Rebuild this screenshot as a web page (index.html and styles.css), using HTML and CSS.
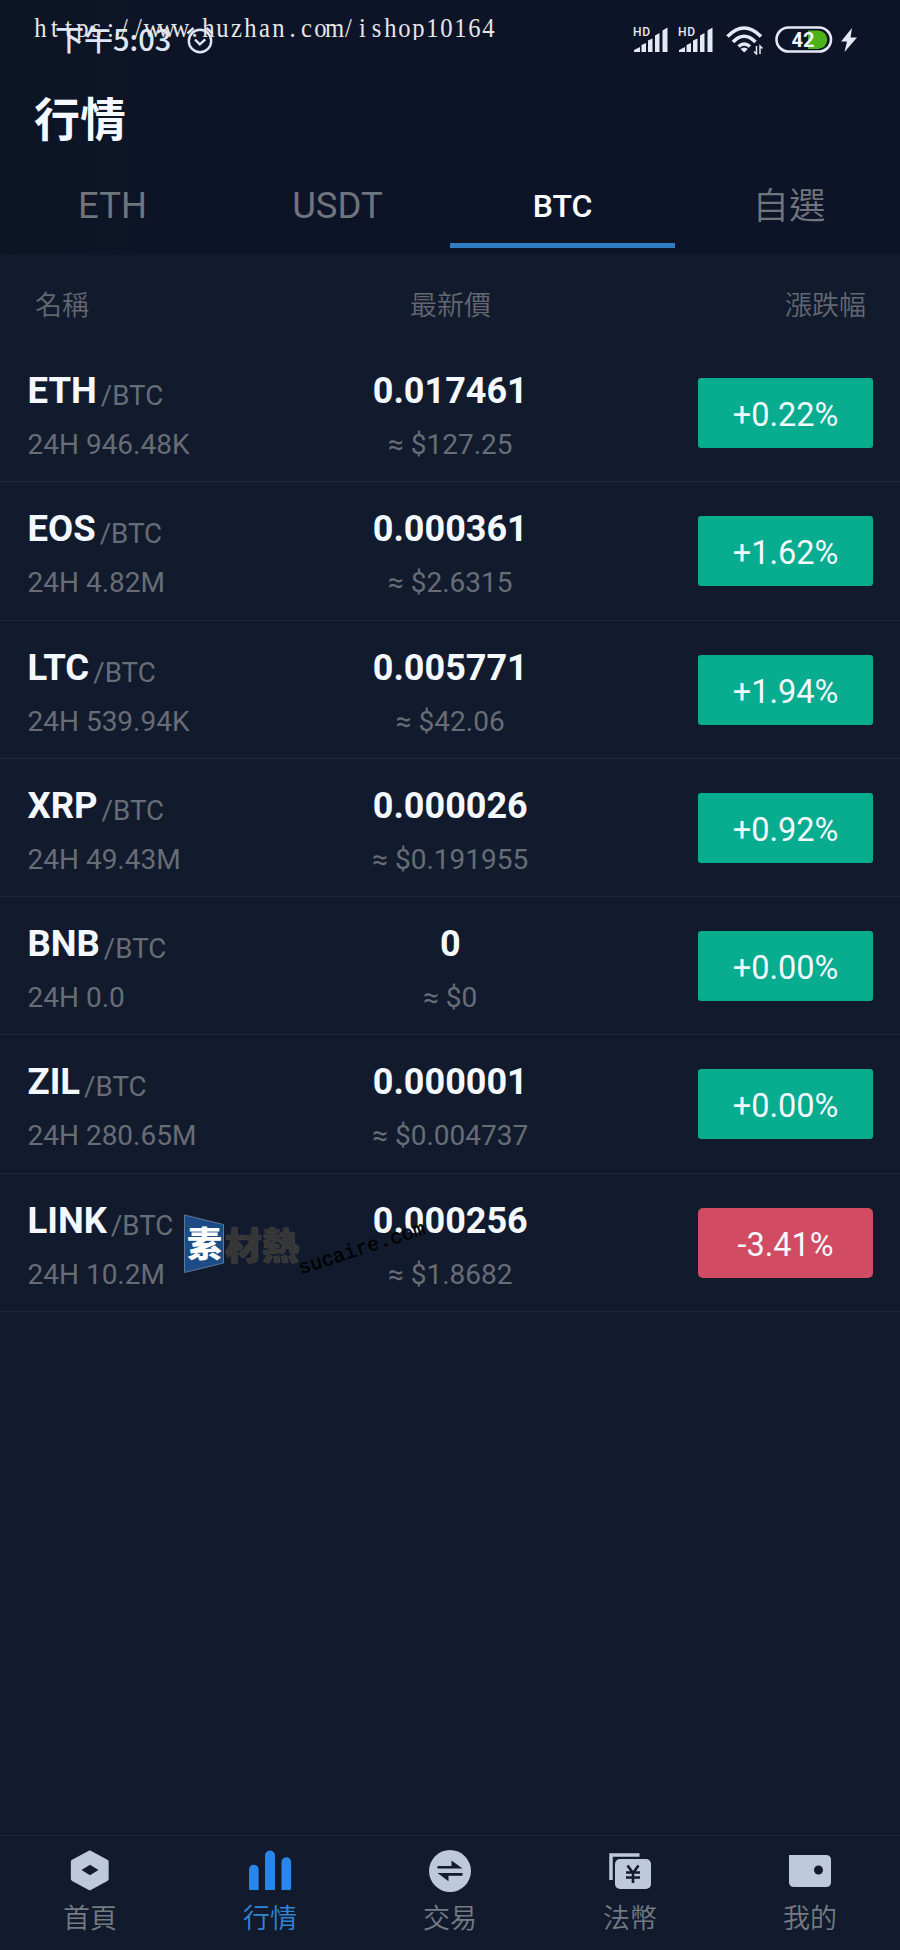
FILE: index.html
```html
<!DOCTYPE html>
<html lang="zh-Hant">
<head>
<meta charset="utf-8">
<title>行情</title>
<link rel="stylesheet" href="styles.css">
</head>
<body>
<div class="screen">
  <header class="top">
    <div class="status">
      <div class="status-left">
        <span class="clock">下午5:03</span>
        <svg class="alarm" width="30" height="30" viewBox="0 0 30 30" fill="none" stroke="#dfe6f6" stroke-width="2.4"><circle cx="15" cy="16" r="11.2"/><path d="M10 14.500l4.800 4.800 5.500-5M2.500 8.500l6-5.500M27.500 8.500l-6-5.500"/></svg>
      </div>
      <div class="status-right">
        <svg width="36" height="28" viewBox="0 0 36 28" fill="#e4e9f6"><text class="hd" x="0" y="9.500">HD</text><path d="M1 26v-2l6-3v5zM8.500 26v-7l4.500-2v9zM15 26V14.500l4.500-2V26zM22 26V9.500l4.500-2.500v19zM29.500 26V4.500l5-3V26z"/></svg>
        <svg width="36" height="28" viewBox="0 0 36 28" fill="#e4e9f6"><text class="hd" x="0" y="9.500">HD</text><path d="M1 26v-2l6-3v5zM8.500 26v-7l4.500-2v9zM15 26V14.500l4.500-2V26zM22 26V9.500l4.500-2.500v19zM29.500 26V4.500l5-3V26z"/></svg>
        <svg class="wifi" width="38" height="30" viewBox="0 0 38 30" fill="none" stroke="#e4e9f6" stroke-width="3.600"><path d="M1.500 11.500Q18 -5.500 35 11.500M7 17Q18 5.500 29.500 17M12.500 21.500q5.700-5 11.400 0"/><path d="M14.500 24l3.700 3.500 3.700-3.500q-3.700-3-7.400 0z" fill="#e4e9f6" stroke="none"/><path d="M30.500 21v8l-2.500-2.500M34 29v-8l2.500 2.500" stroke-width="1.500"/></svg>
        <svg class="battery" width="58" height="28" viewBox="0 0 58 28"><rect x="1.500" y="1.500" width="54.500" height="24" rx="12" fill="none" stroke="#e4e9f6" stroke-width="2.600"/><path d="M33 4.500h10a9.200 9.200 0 0 1 0 18.500H33z" fill="#4cb31c"/><text class="level" x="28" y="20.800">42</text></svg>
        <svg class="bolt" width="16" height="26" viewBox="0 0 16 26" fill="#e4e9f6"><path d="M11 1L0 14.500h6L3.500 25 16 10.500H9.500z"/></svg>
      </div>
    </div>
    <h1 class="title">行情</h1>
    <nav class="tabs">
      <a class="tab">ETH</a><a class="tab">USDT</a><a class="tab active">BTC</a><a class="tab fav">自選</a>
    </nav>
  </header>
  <main class="market">
    <div class="heads"><span>名稱</span><span>最新價</span><span>漲跌幅</span></div>
    <section class="row"><div class="coin"><p class="pair"><b>ETH</b><span>/BTC</span></p><p class="sub">24H 946.48K</p></div><div class="quote"><p class="price">0.017461</p><p class="sub">≈ $127.25</p></div><div class="badge">+0.22%</div></section>
    <section class="row"><div class="coin"><p class="pair"><b>EOS</b><span>/BTC</span></p><p class="sub">24H 4.82M</p></div><div class="quote"><p class="price">0.000361</p><p class="sub">≈ $2.6315</p></div><div class="badge">+1.62%</div></section>
    <section class="row"><div class="coin"><p class="pair"><b>LTC</b><span>/BTC</span></p><p class="sub">24H 539.94K</p></div><div class="quote"><p class="price">0.005771</p><p class="sub">≈ $42.06</p></div><div class="badge">+1.94%</div></section>
    <section class="row"><div class="coin"><p class="pair"><b>XRP</b><span>/BTC</span></p><p class="sub">24H 49.43M</p></div><div class="quote"><p class="price">0.000026</p><p class="sub">≈ $0.191955</p></div><div class="badge">+0.92%</div></section>
    <section class="row"><div class="coin"><p class="pair"><b>BNB</b><span>/BTC</span></p><p class="sub">24H 0.0</p></div><div class="quote"><p class="price">0</p><p class="sub">≈ $0</p></div><div class="badge">+0.00%</div></section>
    <section class="row"><div class="coin"><p class="pair"><b>ZIL</b><span>/BTC</span></p><p class="sub">24H 280.65M</p></div><div class="quote"><p class="price">0.000001</p><p class="sub">≈ $0.004737</p></div><div class="badge">+0.00%</div></section>
    <section class="row"><div class="coin"><p class="pair"><b>LINK</b><span>/BTC</span></p><p class="sub">24H 10.2M</p></div><div class="quote"><p class="price">0.000256</p><p class="sub">≈ $1.8682</p></div><div class="badge down">-3.41%</div></section>
  </main>
  <nav class="dock">
    <a class="item"><svg width="44" height="44" viewBox="0 0 44 44"><path d="M21 1.500q1-.6 2 0l17 9.500q1.300.8 1.300 2v18q0 1.200-1.300 2l-17 9.500q-1 .6-2 0l-17-9.500q-1.300-.8-1.300-2V13q0-1.200 1.300-2z" transform="translate(.2 .2) scale(.98 .96)" fill="#bfc9dc"/><path d="M22 15.700l8.500 5.300-8.500 5.300-8.500-5.300z" fill="#131b2d"/></svg><span>首頁</span></a>
    <a class="item on"><svg width="44" height="44" viewBox="0 0 44 44" fill="#2a86ea"><path d="M1 39.500V20.500a4.800 4.800 0 0 1 9.600 0V41H2.500Q1 41 1 39.500zM17 41V6.500a5 5 0 0 1 10 0V41zM33.500 41V13a4.800 4.800 0 0 1 9.600 0v26.500q0 1.500-1.500 1.500z"/></svg><span>行情</span></a>
    <a class="item"><svg width="44" height="44" viewBox="0 0 44 44"><circle cx="22" cy="22" r="21" fill="#bfc9dc"/><path d="M9.500 17h14v-5.500l11 8h-25zM34.500 24v2.700h-14v5.500l-11-8.200z" fill="#131b2d"/></svg><span>交易</span></a>
    <a class="item"><svg width="44" height="44" viewBox="0 0 44 44"><path d="M3 31V6h28.500" fill="none" stroke="#bfc9dc" stroke-width="3.500"/><rect x="7" y="10" width="36" height="30" rx="5" fill="#bfc9dc"/><path d="M19.500 16.500l5.500 7.500 5.500-7.500M25 24v10M18 23.500h14M18 28.500h14" fill="none" stroke="#131b2d" stroke-width="2.600"/></svg><span>法幣</span></a>
    <a class="item"><svg width="44" height="44" viewBox="0 0 44 44"><path d="M1 6h37q5 0 5 5v22q0 5-5 5H6q-5 0-5-5z" fill="#bfc9dc"/><circle cx="30.500" cy="21" r="4.500" fill="#131b2d"/></svg><span>我的</span></a>
  </nav>

  <svg class="source" width="520" height="40" viewBox="0 0 520 40"><text transform="scale(.93 1)" y="37" id="source-text">https://www.huzhan.com/ishop10164</text></svg>
  <div class="stamp">
    <svg width="41" height="60" viewBox="0 0 41 60"><path d="M.5 1L39.500 10.500V49L.5 58.500z" fill="#1c4c86" stroke="#5f7896"/><text class="stamp-first" x="20.500" y="43">素</text></svg>
    <span class="stamp-name">材熱</span>
  </div>
  <div class="stamp-site">sucaire.com</div>
</div>
<script src="app.js"></script>
</body>
</html>
```

FILE: app.js
```js
// Places every letter of the address in an equal cell, 14px wide.
const line = document.getElementById('source-text');
line.setAttribute('x', [...line.textContent].map((_, i) => (40.5 + i * 14) / 0.93).join(' '));
```

FILE: styles.css
```css
* { box-sizing: border-box; }
body { margin: 0; background: #121b2d; }
p, h1 { margin: 0; }
.screen {
  position: relative;
  width: 900px;
  height: 1950px;
  display: flex;
  flex-direction: column;
  overflow: hidden;
  background: #121b2d;
  font-family: Roboto, "Noto Sans CJK TC", sans-serif;
  color: #f4f8ff;
}
.top {
  height: 255px;
  background: linear-gradient(90deg, #0c1524, #0d1428 25%, #0d1427);
  display: flex;
  flex-direction: column;
}
.status {
  height: 78px;
  padding: 1px 43px 0 55px;
  display: flex;
  justify-content: space-between;
  align-items: center;
}
.status-left, .status-right { display: flex; align-items: center; }
.status-left { gap: 14px; }
.clock { font: 500 29px/40px "Noto Sans CJK TC", sans-serif; color: #dfe6f6; margin-top: -3px; }
.status-right { gap: 9px; }
.hd { font: 500 12px Roboto, sans-serif; letter-spacing: .8px; }
.wifi { margin-left: 3px; }
.battery { margin-left: 2px; }
.bolt { margin-left: -1px; }
.level { font: 700 20px Roboto, sans-serif; fill: #f1f5ff; text-anchor: middle; }
.title { padding-left: 34px; font: 700 46px/76px "Noto Sans CJK TC", sans-serif; }
.tabs { display: flex; height: 92px; margin-top: 2px; }
.tab {
  flex: 1;
  text-align: center;
  font-size: 36.5px;
  line-height: 100px;
  color: #70747d;
}
.tab.fav { text-indent: 3px; font: 350 36.5px/96px "Noto Sans CJK TC", sans-serif; }
.tab.active {
  font-size: 32px;
  font-weight: 500;
  color: #fff;
  border-bottom: 5px solid #2f7dc4;
}
.market { flex: 1; }
.heads {
  height: 89px;
  padding: 0 34px 0 35px;
  display: grid;
  grid-template-columns: 1fr 1fr 1fr;
  font: 350 27px/97px "Noto Sans CJK TC", sans-serif;
  color: #626772;
}
.heads span:nth-child(2) { text-align: center; }
.heads span:nth-child(3) { text-align: right; }
.row {
  height: 138.25px;
  padding: 0 27px 0 27.5px;
  display: grid;
  grid-template-columns: 1fr 300px 1fr;
  border-bottom: 1px solid #1d283a;
}
.coin, .quote { padding-top: 23px; }
.quote { text-align: center; }
.pair, .price { height: 48px; line-height: 48px; font-size: 36px; white-space: nowrap; }
.price { font-weight: 700; }
.pair { display: flex; font-size: 36.5px; }
.pair span { margin: 5px 0 0 4px; font-size: 27.7px; color: #686c76; }
.sub { font-size: 28px; line-height: 60px; color: #686c76; white-space: nowrap; }
.badge {
  justify-self: end;
  margin-top: 34px;
  width: 175px;
  height: 70px;
  border-radius: 3px;
  background: #08ac8e;
  text-align: center;
  font-size: 32.5px;
  line-height: 74px;
}
.badge.down { background: #d14c63; border-radius: 5px; }
.dock {
  height: 115px;
  padding-top: 13px;
  display: flex;
  border-top: 1px solid #1e2838;
}
.item { flex: 1; display: flex; flex-direction: column; align-items: center; color: #747b83; }
.item span { font: 350 27px/46px "Noto Sans CJK TC", sans-serif; margin-top: 1px; }
.item.on { color: #3085d2; }
.source { position: absolute; left: 0; top: 0; }
.source text { font: 26.5px "Liberation Serif", serif; fill: #e6e6e6; text-anchor: middle; }
.stamp { position: absolute; left: 184px; top: 1214px; display: flex; align-items: center; }
.stamp-first { font: 900 35px "Noto Sans CJK TC", sans-serif; fill: #fff; text-anchor: middle; }
.stamp-name { font: 900 37px/60px "Noto Sans CJK TC", sans-serif; color: #363636; text-shadow: 0 0 1px #666; }
.stamp-site {
  position: absolute;
  left: 303px;
  top: 1257px;
  font: 20px/24px "Liberation Mono", monospace;
  color: #000;
  -webkit-text-stroke: .4px #000;
  transform: rotate(-18deg);
  transform-origin: left bottom;
}
```
